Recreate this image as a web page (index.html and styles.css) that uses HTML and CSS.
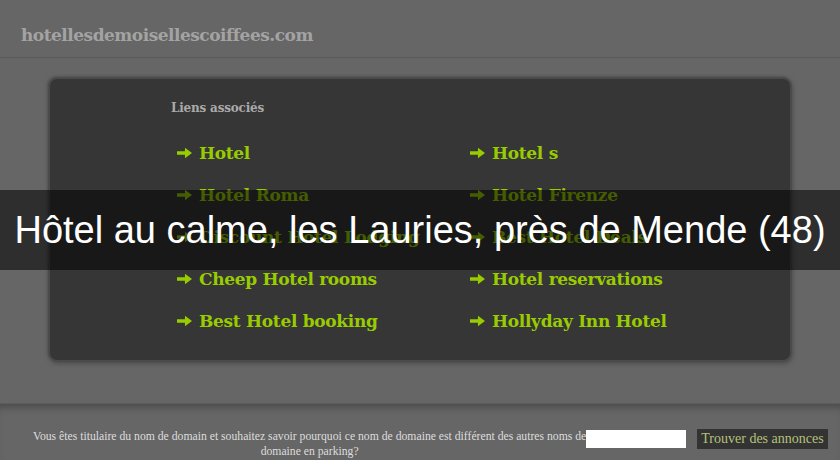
FILE: index.html
```html
<!DOCTYPE html>
<html lang="fr">
<head>
    <meta charset="UTF-8">
    <meta name="viewport" content="width=device-width, initial-scale=1.0">
    <title>hotellesdemoisellescoiffees.com</title>
    <link rel="stylesheet" href="styles.css">
</head>
<body>
    <div class="header">
        <div class="domain">hotellesdemoisellescoiffees.com</div>
    </div>
    <div class="main">
        <div class="panel">
            <div class="panel-title">Liens associés</div>
            <div class="links">
                <a href="#" class="link"><svg class="arrow" viewBox="0 0 16 12"><path d="M0 4.2h8.5V0.5L16 6l-7.5 5.5V7.8H0z"/></svg>Hotel</a>
                <a href="#" class="link"><svg class="arrow" viewBox="0 0 16 12"><path d="M0 4.2h8.5V0.5L16 6l-7.5 5.5V7.8H0z"/></svg>Hotel s</a>
                <a href="#" class="link"><svg class="arrow" viewBox="0 0 16 12"><path d="M0 4.2h8.5V0.5L16 6l-7.5 5.5V7.8H0z"/></svg>Hotel Roma</a>
                <a href="#" class="link"><svg class="arrow" viewBox="0 0 16 12"><path d="M0 4.2h8.5V0.5L16 6l-7.5 5.5V7.8H0z"/></svg>Hotel Firenze</a>
                <a href="#" class="link"><svg class="arrow" viewBox="0 0 16 12"><path d="M0 4.2h8.5V0.5L16 6l-7.5 5.5V7.8H0z"/></svg>Discount Hotel Lodging</a>
                <a href="#" class="link"><svg class="arrow" viewBox="0 0 16 12"><path d="M0 4.2h8.5V0.5L16 6l-7.5 5.5V7.8H0z"/></svg>Best Hotel Deals</a>
                <a href="#" class="link"><svg class="arrow" viewBox="0 0 16 12"><path d="M0 4.2h8.5V0.5L16 6l-7.5 5.5V7.8H0z"/></svg>Cheep Hotel rooms</a>
                <a href="#" class="link"><svg class="arrow" viewBox="0 0 16 12"><path d="M0 4.2h8.5V0.5L16 6l-7.5 5.5V7.8H0z"/></svg>Hotel reservations</a>
                <a href="#" class="link"><svg class="arrow" viewBox="0 0 16 12"><path d="M0 4.2h8.5V0.5L16 6l-7.5 5.5V7.8H0z"/></svg>Best Hotel booking</a>
                <a href="#" class="link"><svg class="arrow" viewBox="0 0 16 12"><path d="M0 4.2h8.5V0.5L16 6l-7.5 5.5V7.8H0z"/></svg>Hollyday Inn Hotel</a>
            </div>
        </div>
    </div>
    <div class="footer">
        <div class="footer-text">Vous êtes titulaire du nom de domain et souhaitez savoir pourquoi ce nom de domaine est différent des autres noms de<br>domaine en parking?</div>
        <input type="text" class="search">
        <button class="find">Trouver des annonces</button>
    </div>
    <div class="overlay">
        <div class="overlay-text">Hôtel au calme, les Lauries, près de Mende (48)</div>
    </div>
</body>
</html>
```

FILE: styles.css
```css
* { box-sizing: border-box; margin: 0; padding: 0; }
body { background: #666; font-family: "DejaVu Serif", serif; height: 460px; overflow: hidden; position: relative; }
.header { height: 58px; border-bottom: 1px solid #5a5a5a; padding: 25px 0 0 21px; }
.domain { color: #a3a3a3; font-size: 17px; font-weight: bold; letter-spacing: -0.5px; }
.main { padding: 19px 48px 0; height: 345px; }
.panel { height: 285px; background: #363636; border: 2px solid #4b4b4b; border-radius: 9px; box-shadow: -1px -1px 2px #555, 1px 2px 4px #4e4e4e; padding: 22px 0 0 121px; }
.panel-title { color: #aaa; font-size: 12px; font-weight: bold; letter-spacing: -0.2px; }
.links { display: grid; grid-template-columns: 293px 1fr; grid-auto-rows: 42px; margin-top: 26px; padding-left: 6px; }
.link { display: flex; align-items: center; height: 24px; color: #99cc00; text-decoration: none; font-size: 17px; font-weight: bold; letter-spacing: -0.3px; }
.arrow { width: 15px; height: 12px; fill: #99cc00; margin-right: 7px; flex-shrink: 0; }
.footer { height: 57px; box-shadow: inset 0 8px 10px -6px #444; border-top: 1px solid #5c5c5c; padding: 25px 0 0 33px; display: flex; align-items: flex-start; }
.footer-text { color: #ddd; font-family: "Liberation Serif", serif; font-size: 11.7px; text-align: center; line-height: 15px; white-space: nowrap; }
.search { width: 100px; height: 18px; border: none; background: #fff; margin-top: 1px; }
.find { background: #333; color: #b4c27a; border: none; font-family: "Liberation Serif", serif; font-size: 14px; height: 20px; padding: 0 4px; margin-left: 11px; }
.overlay { position: absolute; left: 0; right: 0; top: 190px; height: 80px; background: rgba(0, 0, 0, 0.55); display: flex; align-items: center; justify-content: center; }
.overlay-text { color: #fff; font-family: "Liberation Sans", Arial, sans-serif; font-size: 38px; }
```
